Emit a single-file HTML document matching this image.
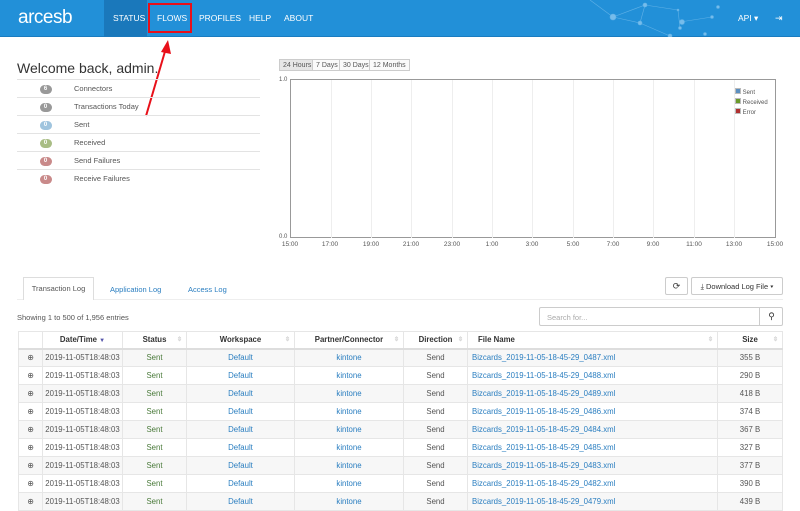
<!DOCTYPE html>
<html><head><style>
*{box-sizing:border-box;margin:0;padding:0}
body{width:800px;height:509px;overflow:hidden;background:#fff;font-family:"Liberation Sans",sans-serif;font-size:8px;color:#555;position:relative}
.a{position:absolute}
.hdr{left:0;top:0;width:800px;height:37px;background:#2290d8;border-bottom:1px solid #1a7cc0}
.nav{top:0;height:37px;line-height:37px;color:#fff;font-size:8.5px}
.st td{height:18px;border-top:1px solid #e3e3e3}
.badge{display:inline-block;width:12px;height:9px;border-radius:5px;color:#fff;font-size:6px;line-height:9px;text-align:center;font-weight:bold}
.btn{border:1px solid #ccc;background:#fafafa;font-size:7px;height:12px;line-height:11px;padding:0 3px;top:59px}
table.t{position:absolute;left:18px;top:331px;width:764px;border-collapse:collapse;table-layout:fixed}
table.t td,table.t th{border:1px solid #e6e6e6;height:18px;text-align:center;font-size:7.8px;white-space:nowrap;overflow:hidden}
table.t th{font-weight:bold;color:#333;height:17px;border-bottom:2px solid #ddd;position:relative}
table.t th i{position:absolute;right:4px;top:4px;font-style:normal;color:#ccc;font-size:6px}
table.t tr:nth-child(even) td{background:#f7f7f7}
.l{color:#2a7ec0}.g{color:#4a7a3a}
.fn{text-align:left!important;padding-left:4px}
.gl{position:absolute;top:0;width:1px;height:158px;background:#eee}
.tk{position:absolute;top:241px;font-size:6.5px;color:#555;width:30px;text-align:center}
</style></head><body>
<div class="a hdr"></div>
<svg class="a" style="left:560px;top:0" width="240" height="37"><g stroke="#6fb9ea" stroke-width=".6" fill="#8cc8f0" opacity=".8"><line x1="53" y1="17" x2="85" y2="5"/><line x1="53" y1="17" x2="80" y2="23"/><line x1="85" y1="5" x2="80" y2="23"/><line x1="80" y1="23" x2="110" y2="36"/><line x1="85" y1="5" x2="118" y2="10"/><line x1="120" y1="28" x2="118" y2="10"/><line x1="120" y1="22" x2="152" y2="17"/><line x1="30" y1="0" x2="53" y2="17"/><circle cx="53" cy="17" r="3"/><circle cx="85" cy="5" r="2"/><circle cx="80" cy="23" r="2"/><circle cx="110" cy="36" r="2"/><circle cx="120" cy="28" r="1.5"/><circle cx="122" cy="22" r="2.5"/><circle cx="145" cy="34" r="1.5"/><circle cx="152" cy="17" r="1.5"/><circle cx="158" cy="7" r="1.5"/><circle cx="118" cy="10" r="1"/></g></svg>
<div class="a" style="left:18px;top:7px;color:#fff;font-size:19px;letter-spacing:-.5px">arcesb</div>
<div class="a" style="left:104px;top:0;width:43px;height:37px;background:#1a78bb"></div>
<div class="a nav" style="left:113px">STATUS</div>
<div class="a nav" style="left:157px">FLOWS</div>
<div class="a nav" style="left:199px">PROFILES</div>
<div class="a nav" style="left:249px">HELP</div>
<div class="a nav" style="left:284px">ABOUT</div>
<div class="a nav" style="left:738px">API ▾</div>
<div class="a nav" style="left:775px;font-size:9px">⇥</div>
<div class="a" style="left:148px;top:3px;width:44px;height:30px;border:2px solid #e8101a"></div>
<svg class="a" style="left:140px;top:38px" width="40" height="80"><line x1="6" y1="78" x2="26" y2="10" stroke="#e8101a" stroke-width="2"/><polygon points="28,2 21,14 31,16" fill="#e8101a"/></svg>
<div class="a" style="left:17px;top:60px;font-size:14px;color:#333">Welcome back, admin.</div>
<table class="a st" style="left:17px;top:79px;width:243px;border-collapse:collapse;font-size:7.5px">
<tr><td style="width:57px;text-align:center"><span class="badge" style="background:#999">6</span></td><td>Connectors</td></tr>
<tr><td style="text-align:center"><span class="badge" style="background:#999">0</span></td><td>Transactions Today</td></tr>
<tr><td style="text-align:center"><span class="badge" style="background:#9fc4de">0</span></td><td>Sent</td></tr>
<tr><td style="text-align:center"><span class="badge" style="background:#a9bd85">0</span></td><td>Received</td></tr>
<tr><td style="text-align:center"><span class="badge" style="background:#c98a8a">0</span></td><td>Send Failures</td></tr>
<tr><td style="text-align:center"><span class="badge" style="background:#c98a8a">0</span></td><td>Receive Failures</td></tr>
</table>
<div class="a btn" style="left:279px;background:#e6e6e6">24 Hours</div>
<div class="a btn" style="left:312px">7 Days</div>
<div class="a btn" style="left:339px">30 Days</div>
<div class="a btn" style="left:369px">12 Months</div>
<div class="a" style="left:279px;top:77px;font-size:6px">1.0</div>
<div class="a" style="left:279px;top:234px;font-size:6px">0.0</div>
<div class="a" style="left:290px;top:79px;width:486px;height:159px;border:1px solid #999">
<div class="gl" style="left:40px"></div><div class="gl" style="left:80px"></div><div class="gl" style="left:120px"></div><div class="gl" style="left:161px"></div><div class="gl" style="left:201px"></div><div class="gl" style="left:241px"></div><div class="gl" style="left:282px"></div><div class="gl" style="left:322px"></div><div class="gl" style="left:362px"></div><div class="gl" style="left:403px"></div><div class="gl" style="left:443px"></div>
<div class="a" style="left:444px;top:8px;font-size:6px;line-height:10px;color:#555"><span style="display:inline-block;width:6px;height:6px;background:#5b8fc0;border:1px solid #bbb"></span> Sent<br><span style="display:inline-block;width:6px;height:6px;background:#6a9a2a;border:1px solid #bbb"></span> Received<br><span style="display:inline-block;width:6px;height:6px;background:#b03030;border:1px solid #bbb"></span> Error</div>
</div>
<div class="tk" style="left:275px">15:00</div><div class="tk" style="left:315px">17:00</div><div class="tk" style="left:356px">19:00</div><div class="tk" style="left:396px">21:00</div><div class="tk" style="left:437px">23:00</div><div class="tk" style="left:477px">1:00</div><div class="tk" style="left:517px">3:00</div><div class="tk" style="left:558px">5:00</div><div class="tk" style="left:598px">7:00</div><div class="tk" style="left:638px">9:00</div><div class="tk" style="left:679px">11:00</div><div class="tk" style="left:719px">13:00</div><div class="tk" style="left:760px">15:00</div>
<div class="a" style="left:17px;top:299px;width:766px;height:1px;background:#eee"></div>
<div class="a" style="left:23px;top:277px;width:71px;height:23px;border:1px solid #ddd;border-bottom:none;background:#fff;text-align:center;line-height:22px;font-size:7.5px">Transaction Log</div>
<div class="a l" style="left:110px;top:285px;font-size:7.5px">Application Log</div>
<div class="a l" style="left:188px;top:285px;font-size:7.5px">Access Log</div>
<div class="a" style="left:665px;top:277px;width:23px;height:18px;border:1px solid #ccc;border-radius:2px;text-align:center;line-height:17px;font-size:9px;color:#333">⟳</div>
<div class="a" style="left:691px;top:277px;width:92px;height:18px;border:1px solid #ccc;border-radius:2px;text-align:center;line-height:17px;font-size:7.5px;color:#333">⤓ Download Log File ▾</div>
<div class="a" style="left:17px;top:313px;font-size:7.5px">Showing 1 to 500 of 1,956 entries</div>
<div class="a" style="left:539px;top:307px;width:244px;height:19px;border:1px solid #ccc;border-radius:2px"><span style="position:absolute;left:7px;top:5px;color:#aaa;font-size:7.5px">Search for...</span><span style="position:absolute;left:219px;top:0;width:24px;height:17px;border-left:1px solid #ccc;text-align:center;line-height:17px;font-size:9px;color:#333">⚲</span></div>
<table class="t">
<colgroup><col style="width:24px"><col style="width:80px"><col style="width:64px"><col style="width:108px"><col style="width:109px"><col style="width:64px"><col style="width:250px"><col style="width:65px"></colgroup>
<tr><th></th><th>Date/Time <span style="color:#55a;font-size:6px">▼</span></th><th>Status<i>⇳</i></th><th>Workspace<i>⇳</i></th><th>Partner/Connector<i>⇳</i></th><th>Direction<i>⇳</i></th><th class="fn" style="padding-left:10px">File Name<i>⇳</i></th><th>Size<i>⇳</i></th></tr>
<tr><td>⊕</td><td>2019-11-05T18:48:03</td><td class="g">Sent</td><td class="l">Default</td><td class="l">kintone</td><td>Send</td><td class="fn l">Bizcards_2019-11-05-18-45-29_0487.xml</td><td>355 B</td></tr>
<tr><td>⊕</td><td>2019-11-05T18:48:03</td><td class="g">Sent</td><td class="l">Default</td><td class="l">kintone</td><td>Send</td><td class="fn l">Bizcards_2019-11-05-18-45-29_0488.xml</td><td>290 B</td></tr>
<tr><td>⊕</td><td>2019-11-05T18:48:03</td><td class="g">Sent</td><td class="l">Default</td><td class="l">kintone</td><td>Send</td><td class="fn l">Bizcards_2019-11-05-18-45-29_0489.xml</td><td>418 B</td></tr>
<tr><td>⊕</td><td>2019-11-05T18:48:03</td><td class="g">Sent</td><td class="l">Default</td><td class="l">kintone</td><td>Send</td><td class="fn l">Bizcards_2019-11-05-18-45-29_0486.xml</td><td>374 B</td></tr>
<tr><td>⊕</td><td>2019-11-05T18:48:03</td><td class="g">Sent</td><td class="l">Default</td><td class="l">kintone</td><td>Send</td><td class="fn l">Bizcards_2019-11-05-18-45-29_0484.xml</td><td>367 B</td></tr>
<tr><td>⊕</td><td>2019-11-05T18:48:03</td><td class="g">Sent</td><td class="l">Default</td><td class="l">kintone</td><td>Send</td><td class="fn l">Bizcards_2019-11-05-18-45-29_0485.xml</td><td>327 B</td></tr>
<tr><td>⊕</td><td>2019-11-05T18:48:03</td><td class="g">Sent</td><td class="l">Default</td><td class="l">kintone</td><td>Send</td><td class="fn l">Bizcards_2019-11-05-18-45-29_0483.xml</td><td>377 B</td></tr>
<tr><td>⊕</td><td>2019-11-05T18:48:03</td><td class="g">Sent</td><td class="l">Default</td><td class="l">kintone</td><td>Send</td><td class="fn l">Bizcards_2019-11-05-18-45-29_0482.xml</td><td>390 B</td></tr>
<tr><td>⊕</td><td>2019-11-05T18:48:03</td><td class="g">Sent</td><td class="l">Default</td><td class="l">kintone</td><td>Send</td><td class="fn l">Bizcards_2019-11-05-18-45-29_0479.xml</td><td>439 B</td></tr>
</table>
</body></html>
